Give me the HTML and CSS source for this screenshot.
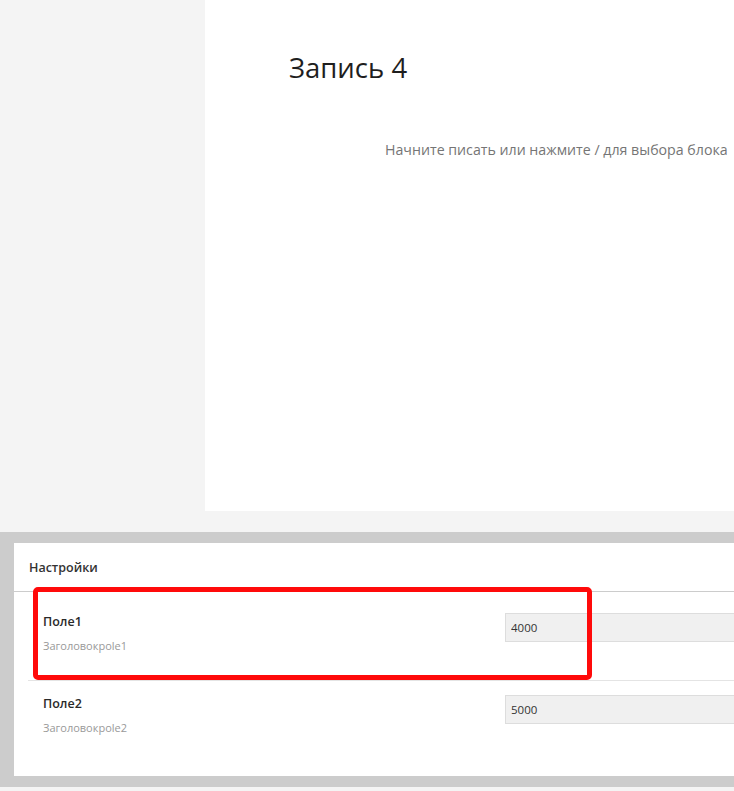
FILE: index.html
```html
<!DOCTYPE html>
<html lang="ru">
<head>
<meta charset="utf-8">
<title>Запись 4</title>
<link rel="stylesheet" href="styles.css">
</head>
<body>
<div class="page">
  <div class="top">
    <aside class="sidebar"></aside>
    <main class="editor">
      <h1 class="post-title">Запись 4</h1>
      <p class="placeholder">Начните писать или нажмите / для выбора блока</p>
    </main>
  </div>
  <div class="spacer"></div>
  <div class="metabox-area">
    <section class="panel">
      <h2 class="panel-title">Настройки</h2>
      <div class="field first">
        <div class="field-label">
          <div class="field-name">Поле1</div>
          <div class="field-desc">Заголовокpole1</div>
        </div>
        <div class="field-input"><input class="text" type="text" value="4000"></div>
      </div>
      <div class="field">
        <div class="field-label">
          <div class="field-name">Поле2</div>
          <div class="field-desc">Заголовокpole2</div>
        </div>
        <div class="field-input"><input class="text" type="text" value="5000"></div>
      </div>
    </section>
  </div>
  <div class="bottom"></div>
  <div class="highlight"></div>
</div>
</body>
</html>
```
FILE: styles.css
```css
html, body {
  margin: 0;
  padding: 0;
}
body {
  width: 734px;
  height: 791px;
  overflow: hidden;
  background: #f4f4f4;
  font-family: "Open Sans", "Noto Sans", sans-serif;
}
.page {
  position: relative;
  width: 734px;
}
.top {
  display: flex;
  height: 511px;
}
.sidebar {
  width: 205px;
  background: #f4f4f4;
}
.editor {
  flex: 1;
  background: #ffffff;
  padding-left: 84px;
  padding-top: 48px;
  box-sizing: border-box;
  overflow: hidden;
}
.post-title {
  margin: 0;
  font-size: 27.5px;
  font-weight: 400;
  line-height: 40px;
  color: #1e1e1e;
  white-space: nowrap;
}
.placeholder {
  margin: 52px 0 0 96px;
  font-size: 14.2px;
  line-height: 20px;
  color: #757575;
  white-space: nowrap;
}
.spacer {
  height: 21px;
  background: #f4f4f4;
}
.metabox-area {
  background: #cccccc;
  padding: 11px 0 11px 14px;
  overflow: hidden;
}
.panel {
  background: #ffffff;
  height: 233px;
  margin-right: -40px;
  box-sizing: border-box;
}
.panel-title {
  margin: 0;
  height: 49px;
  padding: 15px 0 0 15px;
  box-sizing: border-box;
  font-size: 12.5px;
  font-weight: 600;
  line-height: 20px;
  color: #333333;
  border-bottom: 1px solid #cccccc;
}
.field {
  display: flex;
  margin-left: 14px;
  height: 89px;
  padding-top: 14px;
  box-sizing: border-box;
  border-top: 1px solid #e4e4e4;
}
.field.first {
  border-top: none;
  height: 88px;
  padding-top: 21px;
}
.field-label {
  width: 477px;
  padding-left: 15px;
  box-sizing: border-box;
  flex-shrink: 0;
}
.field-name {
  font-size: 12.5px;
  font-weight: 600;
  line-height: 18px;
  color: #2a2a2a;
}
.field-desc {
  margin-top: 7px;
  font-size: 11px;
  line-height: 16px;
  color: #999999;
}
.field-input {
  flex: 1;
}
.text {
  display: block;
  width: 100%;
  height: 29px;
  margin: 0;
  padding: 0 5px;
  box-sizing: border-box;
  border: 1px solid #dddddd;
  background: #f0f0f0;
  font-family: "Open Sans", "Noto Sans", sans-serif;
  font-size: 11.5px;
  color: #333333;
  outline: none;
}
.bottom {
  height: 4px;
  background: #f4f4f4;
}
.highlight {
  position: absolute;
  left: 33px;
  top: 587px;
  width: 559px;
  height: 93px;
  box-sizing: border-box;
  border: 5px solid #ff0a0a;
  border-radius: 5px;
}
```
